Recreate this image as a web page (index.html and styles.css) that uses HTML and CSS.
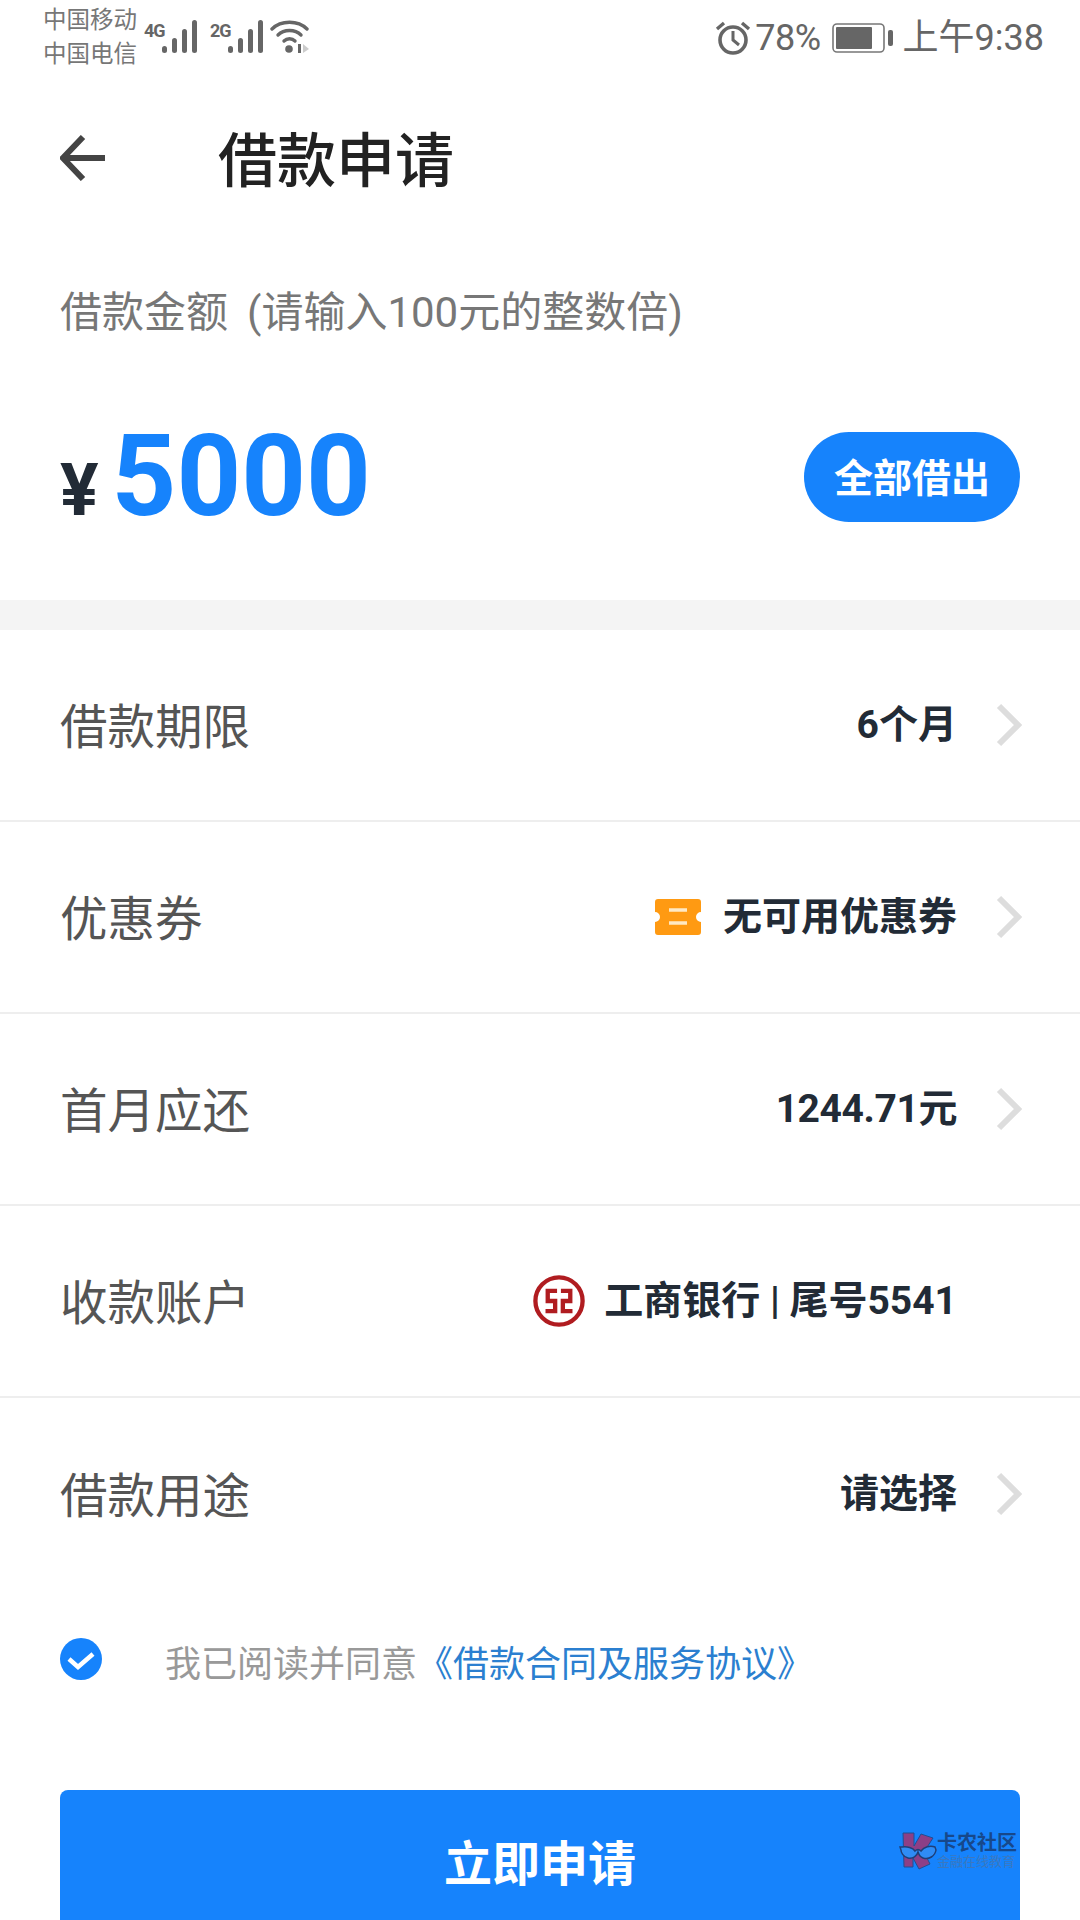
FILE: index.html
```html
<!DOCTYPE html>
<html lang="zh-CN">
<head>
    <meta charset="UTF-8">
    <meta name="viewport" content="width=device-width, initial-scale=1.0">
    <title>借款申请</title>
    <link rel="stylesheet" href="styles.css">
</head>
<body>
    <div class="page">
        <!-- Status bar -->
        <div class="status-bar">
            <div class="carriers">
                <div>中国移动</div>
                <div>中国电信</div>
            </div>
            <div class="net net-first">
                <span class="net-type">4G</span>
                <svg class="signal" width="36" height="34" viewBox="0 0 36 34"><g fill="#666"><rect x="0" y="26" width="5" height="7" rx="2.5"/><rect x="10" y="18" width="5" height="15" rx="2.5"/><rect x="20" y="9" width="5" height="24" rx="2.5"/><rect x="30" y="0" width="5" height="33" rx="2.5"/></g></svg>
            </div>
            <div class="net">
                <span class="net-type">2G</span>
                <svg class="signal" width="36" height="34" viewBox="0 0 36 34"><g fill="#666"><rect x="0" y="26" width="5" height="7" rx="2.5"/><rect x="10" y="18" width="5" height="15" rx="2.5"/><rect x="20" y="9" width="5" height="24" rx="2.5"/><rect x="30" y="0" width="5" height="33" rx="2.5"/></g></svg>
            </div>
            <svg class="wifi" width="42" height="34" viewBox="0 0 42 34">
                <g fill="none" stroke="#666" stroke-width="3.400" stroke-linecap="round">
                    <path d="M2 9 C11 0 28 0 37 9"/>
                    <path d="M8 15 C14 9 25 9 31 15"/>
                    <path d="M14 21 C17 18 22 18 25 21"/>
                </g>
                <circle cx="19" cy="29" r="3.800" fill="#666"/>
                <rect x="28" y="24" width="3" height="9" fill="#666"/>
                <path d="M33 24 L39 29 L33 33 Z" fill="#ccc"/>
            </svg>
            <div class="status-right">
                <svg width="36" height="36" viewBox="0 0 36 36">
                    <circle cx="18" cy="20" r="13" fill="none" stroke="#666" stroke-width="3.600"/>
                    <path d="M18 11 V20 L24 25" fill="none" stroke="#666" stroke-width="3"/>
                    <path d="M2 9 L9 3 M34 9 L27 3" stroke="#666" stroke-width="3.400"/>
                </svg>
                <span class="battery-pct">78%</span>
                <svg class="battery" width="62" height="30" viewBox="0 0 62 30">
                    <rect x="1" y="1" width="51" height="28" rx="4" fill="none" stroke="#777" stroke-width="1.600"/>
                    <rect x="4" y="4" width="36" height="22" rx="1" fill="#666"/>
                    <rect x="56" y="7" width="5" height="16" rx="2" fill="#666"/>
                </svg>
                <span class="clock">上午9:38</span>
            </div>
        </div>

        <!-- Header -->
        <div class="header">
            <svg class="back" width="46" height="46" viewBox="0 0 46 46"><path d="M23 2 L3 23 L23 44 M3 23 H45" fill="none" stroke="#444" stroke-width="6"/></svg>
            <h1>借款申请</h1>
        </div>

        <!-- Amount -->
        <div class="amount-box">
            <div class="amount-label">借款金额<span class="amount-hint">(请输入100元的整数倍)</span></div>
            <div class="amount-row">
                <div class="amount">
                    <span class="yen">¥</span>
                    <span class="amount-num">5000</span>
                </div>
                <button class="all-btn">全部借出</button>
            </div>
        </div>

        <div class="band"></div>

        <!-- Rows -->
        <div class="row">
            <span class="row-label">借款期限</span>
            <div class="row-right">
                <span class="row-value">6个月</span>
                <svg class="chevron" width="26" height="44" viewBox="0 0 26 44"><path d="M3 3 L22 22 L3 41" fill="none" stroke="#ddd" stroke-width="6"/></svg>
            </div>
        </div>
        <div class="row">
            <span class="row-label">优惠券</span>
            <div class="row-right">
                <svg class="coupon" width="46" height="36" viewBox="0 0 46 36">
                    <path d="M3 0 H43 A3 3 0 0 1 46 3 V13 A5 5 0 0 0 46 23 V33 A3 3 0 0 1 43 36 H3 A3 3 0 0 1 0 33 V23 A5 5 0 0 0 0 13 V3 A3 3 0 0 1 3 0 Z" fill="#ff9a12"/>
                    <path d="M14 11 H32 M14 24 H32" stroke="#ffe9c4" stroke-width="3.400"/>
                </svg>
                <span class="row-value">无可用优惠券</span>
                <svg class="chevron" width="26" height="44" viewBox="0 0 26 44"><path d="M3 3 L22 22 L3 41" fill="none" stroke="#ddd" stroke-width="6"/></svg>
            </div>
        </div>
        <div class="row">
            <span class="row-label">首月应还</span>
            <div class="row-right">
                <span class="row-value row-value-num">1244.71元</span>
                <svg class="chevron" width="26" height="44" viewBox="0 0 26 44"><path d="M3 3 L22 22 L3 41" fill="none" stroke="#ddd" stroke-width="6"/></svg>
            </div>
        </div>
        <div class="row">
            <span class="row-label">收款账户</span>
            <div class="row-right">
                <svg class="bank" width="52" height="52" viewBox="0 0 54 54">
                    <circle cx="27" cy="27" r="24.500" fill="none" stroke="#b01c20" stroke-width="4.500"/>
                    <g fill="none" stroke="#b01c20" stroke-width="4.500">
                        <path d="M25 16.500 H15.300 V27 H23 V37.500 H13"/>
                        <path d="M29 16.500 H38.700 V27 H31 V37.500 H41"/>
                    </g>
                </svg>
                <span class="row-value">工商银行 | 尾号5541</span>
                <svg class="chevron chevron-hidden" width="26" height="44" viewBox="0 0 26 44"></svg>
            </div>
        </div>
        <div class="row row-last">
            <span class="row-label">借款用途</span>
            <div class="row-right">
                <span class="row-value">请选择</span>
                <svg class="chevron" width="26" height="44" viewBox="0 0 26 44"><path d="M3 3 L22 22 L3 41" fill="none" stroke="#ddd" stroke-width="6"/></svg>
            </div>
        </div>

        <!-- Agreement -->
        <div class="agree">
            <svg class="check" width="42" height="42" viewBox="0 0 42 42">
                <circle cx="21" cy="21" r="21" fill="#1683fc"/>
                <path d="M9 21 L18 29 L33 16" fill="none" stroke="#fff" stroke-width="4.500"/>
            </svg>
            <span class="agree-text">我已阅读并同意<a class="agree-link">《借款合同及服务协议》</a></span>
        </div>

        <!-- Submit -->
        <div class="submit-wrap">
            <button class="submit-btn">立即申请</button>
            <div class="watermark">
                <svg width="38" height="38" viewBox="0 0 38 38">
                    <path d="M4 1 H15 V14 L22 2 L34 6 L25 20 L31 32 L20 37 L14 26 V35 H5 Z" fill="#8d3f86" stroke="#1f4f94" stroke-width="1"/>
                    <path d="M1 15 L3 15 C8 14 14 16 16 19 C18 17 20 17 22 19 C25 15 31 13 36 15 L37 18 C36 24 30 28 24 26 C21 25 20 23 19 20 C18 24 14 27 9 26 C4 25 2 20 2 18 Z" fill="#2f8cf5" stroke="#1f3f78" stroke-width="1.500"/>
                </svg>
                <div class="wm-text">
                    <div class="wm-title">卡农社区</div>
                    <div class="wm-sub">金融在线教育</div>
                </div>
            </div>
        </div>
    </div>
</body>
</html>
```

FILE: styles.css
```css
* {
    box-sizing: border-box;
}

html,
body {
    margin: 0;
    padding: 0;
    background-color: #fff;
}

body {
    font-family: Roboto, "Noto Sans CJK SC", sans-serif;
}

.page {
    width: 1080px;
    height: 1920px;
    overflow: hidden;
}

/* Status bar */
.status-bar {
    display: flex;
    align-items: flex-start;
    height: 75px;
    padding: 3px 36px 0 43px;
    color: #777;
}

.carriers {
    font-size: 23.500px;
    line-height: 34px;
    width: 97px;
}

.net {
    display: flex;
    align-items: flex-start;
    margin-top: 17px;
    width: 66px;
}

.net-first {
    margin-left: 4px;
    width: 66px;
}

.net-type {
    font-size: 18px;
    font-weight: 700;
    line-height: 18px;
    color: #666;
    margin-top: 2px;
    width: 18px;
    letter-spacing: -1px;
}

.signal {
    display: block;
    flex-shrink: 0;
}

.wifi {
    margin-top: 17px;
    margin-left: -6px;
}

.status-right {
    display: flex;
    align-items: center;
    margin-left: auto;
    margin-top: 13px;
    font-size: 36px;
    line-height: 44px;
    color: #666;
}

.battery-pct {
    margin-left: 4px;
    letter-spacing: -0.500px;
}

.battery {
    margin-left: 11px;
}

.clock {
    margin-left: 9px;
}

/* Header */
.header {
    display: flex;
    align-items: center;
    height: 168px;
    padding-left: 60px;
}

.back {
    margin-top: -2px;
}

.header h1 {
    margin: -6px 0 0 112px;
    font-size: 59px;
    font-weight: 500;
    color: #222;
}

/* Amount */
.amount-box {
    height: 357px;
    padding: 45px 60px 0;
}

.amount-label {
    font-size: 42px;
    line-height: 50px;
    color: #777;
}

.amount-hint {
    margin-left: 19px;
}

.amount-row {
    display: flex;
    align-items: center;
    justify-content: space-between;
    margin-top: 79px;
}

.amount {
    display: flex;
    align-items: baseline;
}

.yen {
    font-size: 72px;
    font-weight: 700;
    color: #222b36;
    line-height: 1;
}

.amount-num {
    font-size: 113px;
    font-weight: 700;
    color: #1683fc;
    line-height: 120px;
    margin-left: 13px;
}

.all-btn {
    width: 216px;
    height: 90px;
    border: none;
    border-radius: 45px;
    background-color: #1683fc;
    color: #fff;
    font-family: inherit;
    font-size: 39px;
    font-weight: 700;
    padding: 0 0 4px;
}

.band {
    height: 30px;
    background-color: #f4f4f4;
}

/* Rows */
.row {
    display: flex;
    align-items: center;
    justify-content: space-between;
    height: 192px;
    padding: 0 58px 0 60px;
    border-bottom: 2px solid #eee;
}

.row-last {
    border-bottom: none;
}

.row-label {
    font-size: 47.500px;
    color: #555;
    position: relative;
    top: -2px;
}

.row-right {
    display: flex;
    align-items: center;
}

.row-value {
    font-size: 39px;
    font-weight: 700;
    color: #222b36;
    position: relative;
    top: -4px;
}

.row-value-num {
    letter-spacing: -0.400px;
}

.chevron {
    display: block;
    margin-left: 39px;
}

.chevron-hidden {
    visibility: hidden;
}

.coupon {
    margin-right: 22px;
}

.bank {
    margin-right: 19px;
}

/* Agreement */
.agree {
    display: flex;
    align-items: center;
    height: 138px;
    padding-left: 60px;
}

.agree-text {
    font-size: 36px;
    color: #999;
    margin-left: 63px;
    position: relative;
    top: 2px;
}

.agree-link {
    color: #2b7fd0;
}

/* Submit */
.submit-wrap {
    position: relative;
    margin: 62px 60px 0;
}

.submit-btn {
    display: block;
    width: 100%;
    height: 140px;
    border: none;
    border-radius: 8px 8px 0 0;
    background-color: #1683fc;
    color: #fff;
    font-family: inherit;
    font-size: 48px;
    font-weight: 700;
    padding: 0;
}

/* Forum watermark over the button */
.watermark {
    position: absolute;
    top: 42px;
    right: 3px;
    display: flex;
    align-items: center;
    gap: 0;
}

.wm-title {
    font-size: 20px;
    line-height: 22px;
    font-weight: 700;
    color: #17488a;
    white-space: nowrap;
}

.wm-sub {
    font-size: 13px;
    line-height: 16px;
    color: #3a78c0;
    white-space: nowrap;
}
```
